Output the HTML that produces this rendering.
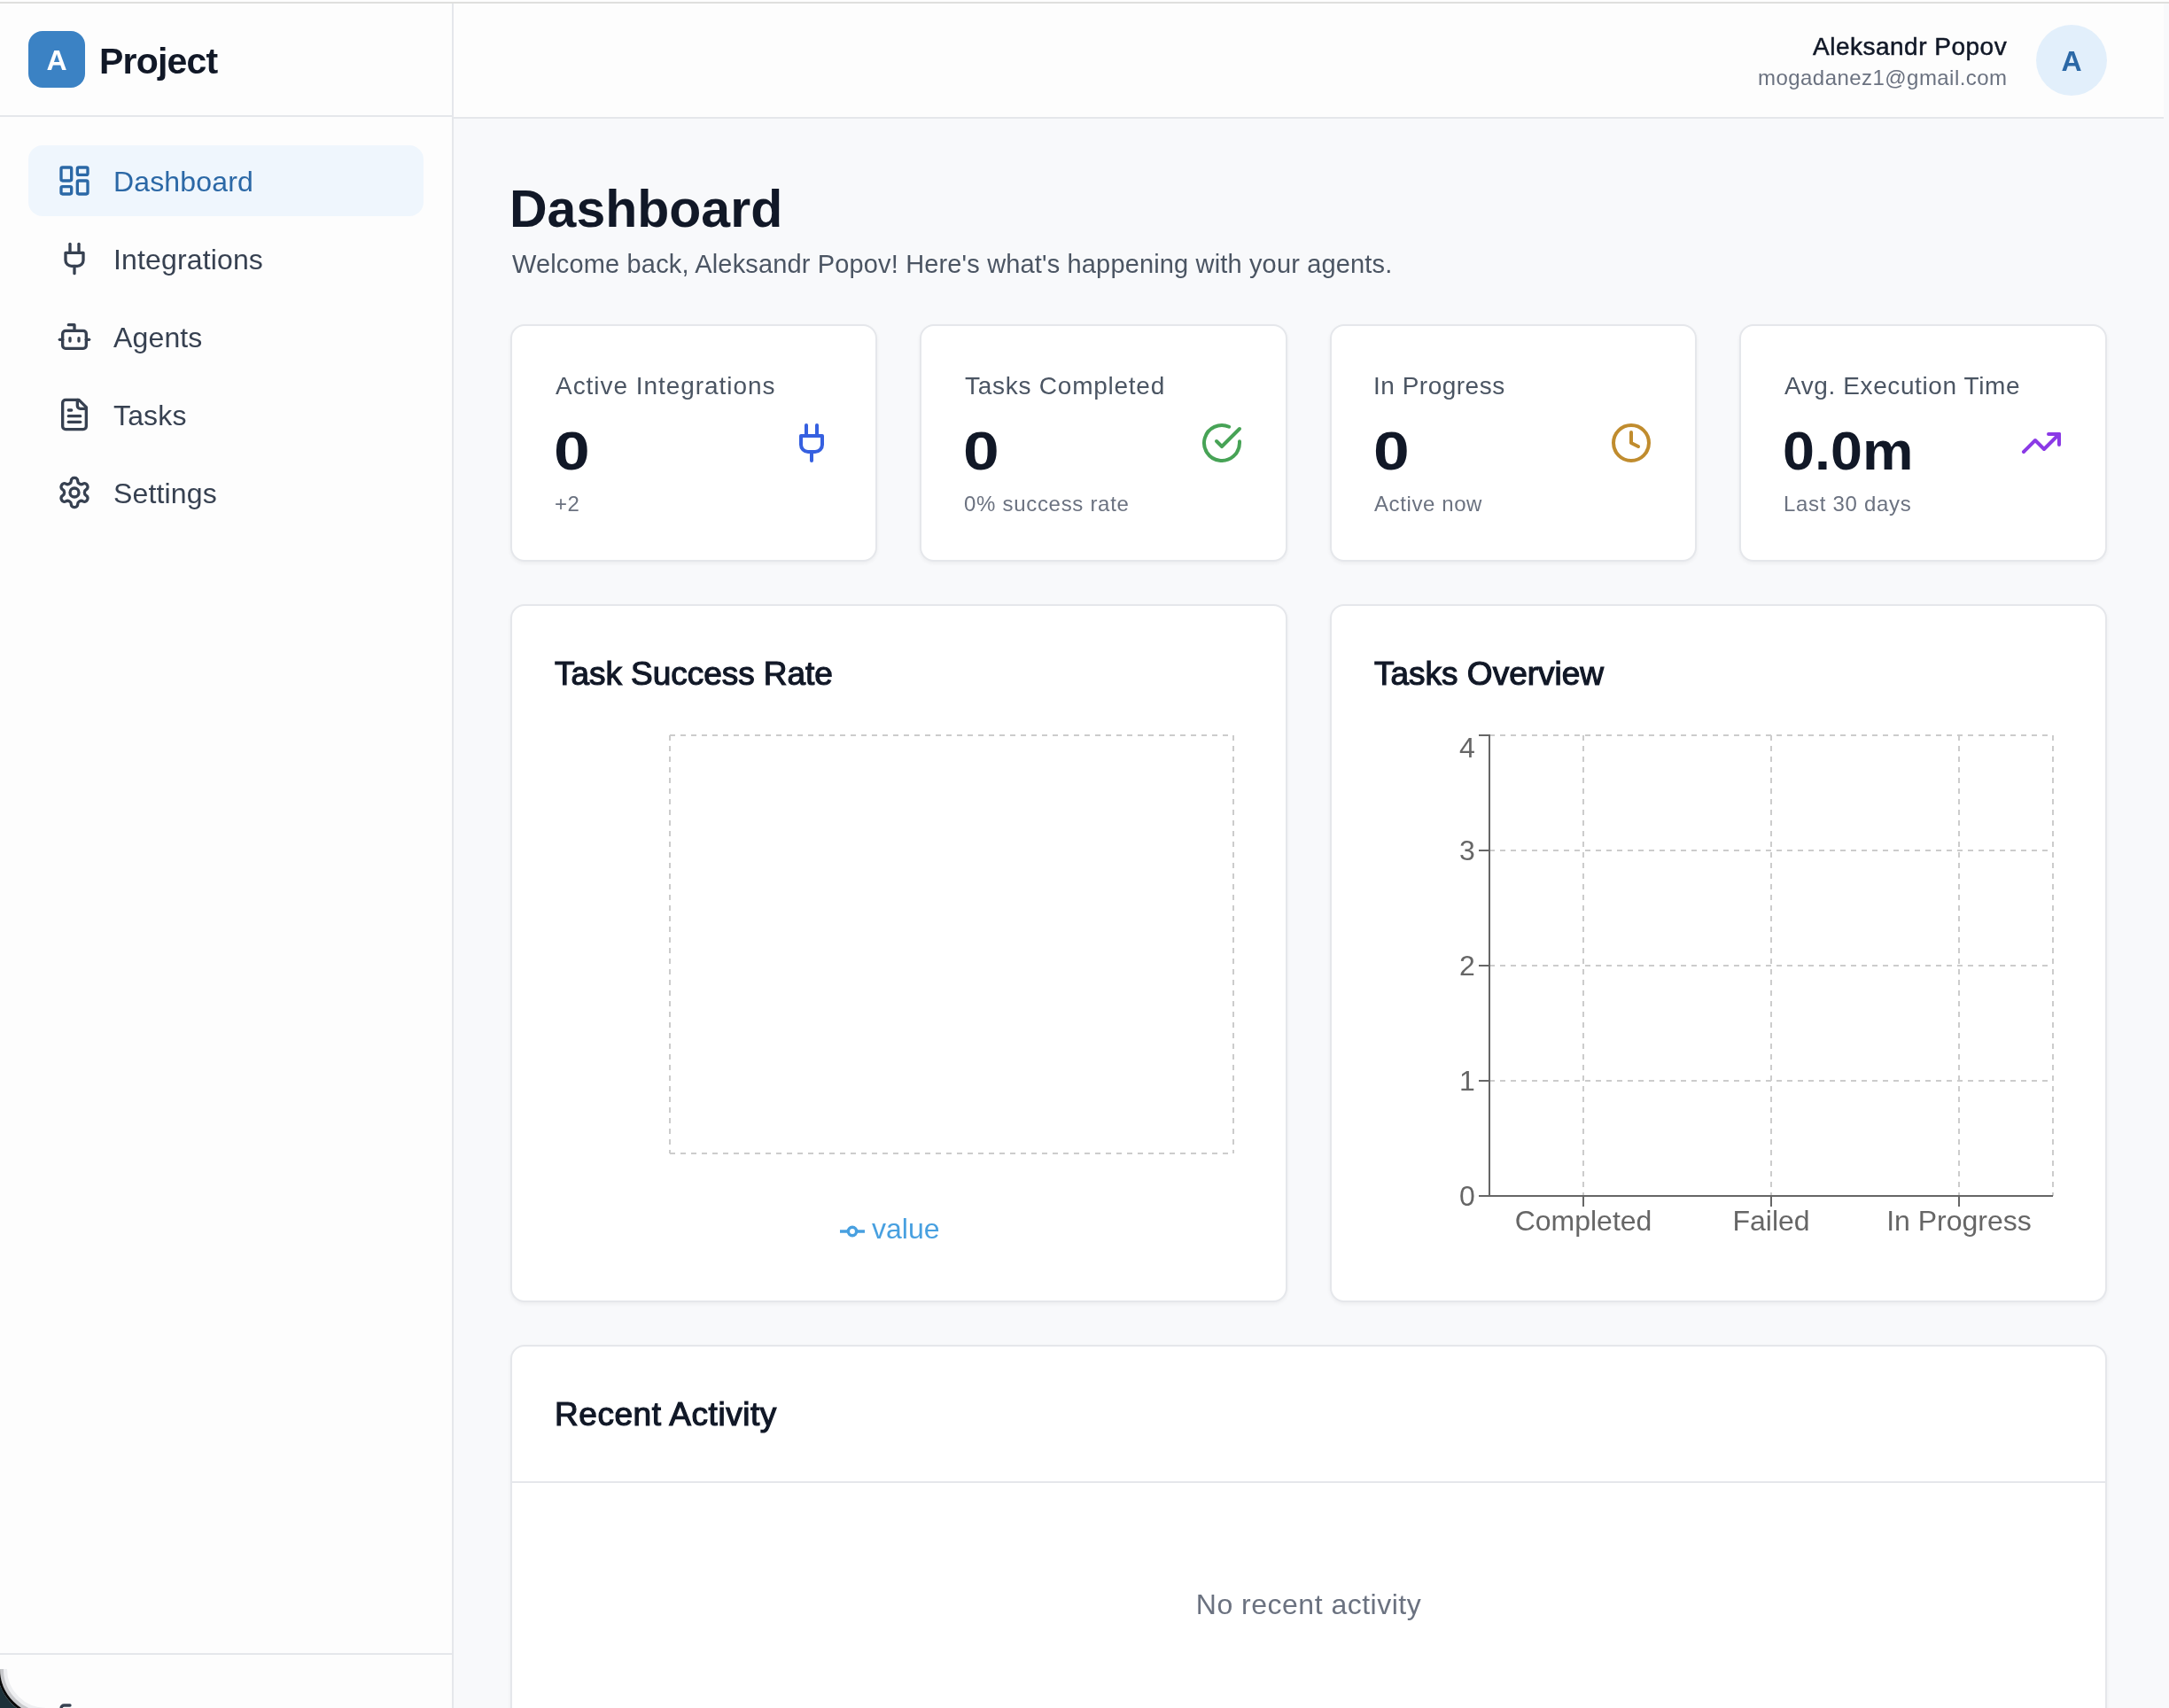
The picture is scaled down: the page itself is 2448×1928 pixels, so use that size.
<!DOCTYPE html>
<html><head><meta charset="utf-8"><style>
html,body{margin:0;padding:0;width:2448px;height:1928px;overflow:hidden;background:#f8f9fb;font-family:"Liberation Sans", sans-serif}
.t{position:absolute;white-space:nowrap;line-height:0;will-change:transform}
@media (max-width:1300px){html{zoom:0.5}}
</style></head><body>
<div style="position:absolute;left:0px;top:0px;width:2448px;height:2px;background:#fdfdfd"></div>
<div style="position:absolute;left:0px;top:2px;width:2448px;height:2px;background:#dfdfdd"></div>
<div style="position:absolute;left:512px;top:4px;width:1936px;height:1924px;background:#f8f9fb"></div>
<div style="position:absolute;left:0px;top:4px;width:512px;height:1924px;background:#fdfdfd;border-right:2px solid #e5e7eb;box-sizing:border-box"></div>
<div style="position:absolute;left:0px;top:130px;width:510px;height:2px;background:#e5e7eb"></div>
<div style="position:absolute;left:32px;top:35px;width:64px;height:64px;background:#3b82c4;border-radius:16px"></div>
<div class="t" style="left:64px;transform:translateX(-50%);top:67.91px;font-size:32px;font-weight:700;color:#ffffff;">A</div>
<div class="t" style="left:111.5px;top:68.79px;font-size:41px;font-weight:700;color:#111827;letter-spacing:-0.8px;">Project</div>
<div style="position:absolute;left:32px;top:164px;width:446px;height:80px;background:#eff6fd;border-radius:16px"></div>
<svg style="position:absolute;left:64px;top:184px" width="40" height="40" viewBox="0 0 24 24" fill="none" stroke="#2b68a6" stroke-width="2" stroke-linecap="round" stroke-linejoin="round"><rect width="7" height="9" x="3" y="3" rx="1"/><rect width="7" height="5" x="14" y="3" rx="1"/><rect width="7" height="9" x="14" y="12" rx="1"/><rect width="7" height="5" x="3" y="16" rx="1"/></svg>
<div class="t" style="left:128px;top:204.91px;font-size:32px;font-weight:400;color:#2b68a6;letter-spacing:0.15px;">Dashboard</div>
<svg style="position:absolute;left:64px;top:272px" width="40" height="40" viewBox="0 0 24 24" fill="none" stroke="#374151" stroke-width="2" stroke-linecap="round" stroke-linejoin="round"><path d="M12 22v-5"/><path d="M9 8V2"/><path d="M15 8V2"/><path d="M18 8v5a4 4 0 0 1-4 4h-4a4 4 0 0 1-4-4V8Z"/></svg>
<div class="t" style="left:128px;top:292.91px;font-size:32px;font-weight:400;color:#374151;letter-spacing:0.15px;">Integrations</div>
<svg style="position:absolute;left:64px;top:360px" width="40" height="40" viewBox="0 0 24 24" fill="none" stroke="#374151" stroke-width="2" stroke-linecap="round" stroke-linejoin="round"><path d="M12 8V4H8"/><rect width="16" height="12" x="4" y="8" rx="2"/><path d="M2 14h2"/><path d="M20 14h2"/><path d="M15 13v2"/><path d="M9 13v2"/></svg>
<div class="t" style="left:128px;top:380.91px;font-size:32px;font-weight:400;color:#374151;letter-spacing:0.15px;">Agents</div>
<svg style="position:absolute;left:64px;top:448px" width="40" height="40" viewBox="0 0 24 24" fill="none" stroke="#374151" stroke-width="2" stroke-linecap="round" stroke-linejoin="round"><path d="M15 2H6a2 2 0 0 0-2 2v16a2 2 0 0 0 2 2h12a2 2 0 0 0 2-2V7Z"/><path d="M14 2v4a2 2 0 0 0 2 2h4"/><path d="M10 9H8"/><path d="M16 13H8"/><path d="M16 17H8"/></svg>
<div class="t" style="left:128px;top:468.91px;font-size:32px;font-weight:400;color:#374151;letter-spacing:0.15px;">Tasks</div>
<svg style="position:absolute;left:64px;top:536px" width="40" height="40" viewBox="0 0 24 24" fill="none" stroke="#374151" stroke-width="2" stroke-linecap="round" stroke-linejoin="round"><path d="M12.22 2h-.44a2 2 0 0 0-2 2v.18a2 2 0 0 1-1 1.73l-.43.25a2 2 0 0 1-2 0l-.15-.08a2 2 0 0 0-2.73.73l-.22.38a2 2 0 0 0 .73 2.73l.15.1a2 2 0 0 1 1 1.72v.51a2 2 0 0 1-1 1.74l-.15.09a2 2 0 0 0-.73 2.73l.22.38a2 2 0 0 0 2.73.73l.15-.08a2 2 0 0 1 2 0l.43.25a2 2 0 0 1 1 1.73V20a2 2 0 0 0 2 2h.44a2 2 0 0 0 2-2v-.18a2 2 0 0 1 1-1.73l.43-.25a2 2 0 0 1 2 0l.15.08a2 2 0 0 0 2.73-.73l.22-.39a2 2 0 0 0-.73-2.73l-.15-.08a2 2 0 0 1-1-1.74v-.5a2 2 0 0 1 1-1.74l.15-.09a2 2 0 0 0 .73-2.73l-.22-.38a2 2 0 0 0-2.73-.73l-.15.08a2 2 0 0 1-2 0l-.43-.25a2 2 0 0 1-1-1.73V4a2 2 0 0 0-2-2z"/><circle cx="12" cy="12" r="3"/></svg>
<div class="t" style="left:128px;top:556.91px;font-size:32px;font-weight:400;color:#374151;letter-spacing:0.15px;">Settings</div>
<div style="position:absolute;left:0px;top:1866px;width:510px;height:2px;background:#e5e7eb"></div>
<div style="position:absolute;left:512px;top:4px;width:1930px;height:130px;background:#fdfdfd;border-bottom:2px solid #e5e7eb;box-sizing:border-box"></div>
<div class="t" style="right:182.5px;top:52.80px;font-size:28px;font-weight:400;color:#111827;letter-spacing:0.5px;-webkit-text-stroke:0.5px #111827">Aleksandr Popov</div>
<div class="t" style="right:182.5px;top:88.18px;font-size:24px;font-weight:400;color:#6b7280;letter-spacing:0.45px;">mogadanez1@gmail.com</div>
<div style="position:absolute;left:2298px;top:28px;width:80px;height:80px;background:#e2effb;border-radius:50%"></div>
<div class="t" style="left:2338px;transform:translateX(-50%);top:68.91px;font-size:32px;font-weight:700;color:#2b68a6;">A</div>
<div class="t" style="left:575px;top:235.56px;font-size:59px;font-weight:700;color:#111827;">Dashboard</div>
<div class="t" style="left:578px;top:298.45px;font-size:29px;font-weight:400;color:#4b5563;letter-spacing:0.15px;">Welcome back, Aleksandr Popov! Here's what's happening with your agents.</div>
<div style="position:absolute;left:576px;top:366px;width:414px;height:268px;background:#fff;border:2px solid #e5e7eb;border-radius:16px;box-sizing:border-box;box-shadow:0 2px 4px rgba(0,0,0,0.05)"></div>
<div class="t" style="left:627px;top:436.30px;font-size:28px;font-weight:400;color:#4b5563;letter-spacing:0.95px;">Active Integrations</div>
<div class="t" style="left:625px;top:509.36px;font-size:61px;font-weight:700;color:#111827;transform:scaleX(1.2);transform-origin:0 0">0</div>
<div class="t" style="left:626px;top:568.88px;font-size:24px;font-weight:400;color:#6b7280;letter-spacing:0.4px;">+2</div>
<svg style="position:absolute;left:892px;top:476px" width="48" height="48" viewBox="0 0 24 24" fill="none" stroke="#3660e0" stroke-width="2" stroke-linecap="round" stroke-linejoin="round"><path d="M12 22v-5"/><path d="M9 8V2"/><path d="M15 8V2"/><path d="M18 8v5a4 4 0 0 1-4 4h-4a4 4 0 0 1-4-4V8Z"/></svg>
<div style="position:absolute;left:1038px;top:366px;width:415px;height:268px;background:#fff;border:2px solid #e5e7eb;border-radius:16px;box-sizing:border-box;box-shadow:0 2px 4px rgba(0,0,0,0.05)"></div>
<div class="t" style="left:1089px;top:436.30px;font-size:28px;font-weight:400;color:#4b5563;letter-spacing:0.75px;">Tasks Completed</div>
<div class="t" style="left:1087px;top:509.36px;font-size:61px;font-weight:700;color:#111827;transform:scaleX(1.2);transform-origin:0 0">0</div>
<div class="t" style="left:1088px;top:568.88px;font-size:24px;font-weight:400;color:#6b7280;letter-spacing:0.7px;">0% success rate</div>
<svg style="position:absolute;left:1355px;top:476px" width="48" height="48" viewBox="0 0 24 24" fill="none" stroke="#47a356" stroke-width="2" stroke-linecap="round" stroke-linejoin="round"><path d="M22 11.08V12a10 10 0 1 1-5.93-9.14"/><polyline points="22 4 12 14.01 9 11.01"/></svg>
<div style="position:absolute;left:1501px;top:366px;width:414px;height:268px;background:#fff;border:2px solid #e5e7eb;border-radius:16px;box-sizing:border-box;box-shadow:0 2px 4px rgba(0,0,0,0.05)"></div>
<div class="t" style="left:1550px;top:436.30px;font-size:28px;font-weight:400;color:#4b5563;letter-spacing:0.5px;">In Progress</div>
<div class="t" style="left:1550px;top:509.36px;font-size:61px;font-weight:700;color:#111827;transform:scaleX(1.2);transform-origin:0 0">0</div>
<div class="t" style="left:1551px;top:568.88px;font-size:24px;font-weight:400;color:#6b7280;letter-spacing:0.6px;">Active now</div>
<svg style="position:absolute;left:1817px;top:476px" width="48" height="48" viewBox="0 0 24 24" fill="none" stroke="#c08c2e" stroke-width="2" stroke-linecap="round" stroke-linejoin="round"><circle cx="12" cy="12" r="10"/><polyline points="12 6 12 12 16 14"/></svg>
<div style="position:absolute;left:1963px;top:366px;width:415px;height:268px;background:#fff;border:2px solid #e5e7eb;border-radius:16px;box-sizing:border-box;box-shadow:0 2px 4px rgba(0,0,0,0.05)"></div>
<div class="t" style="left:2014px;top:436.30px;font-size:28px;font-weight:400;color:#4b5563;letter-spacing:0.6px;">Avg. Execution Time</div>
<div class="t" style="left:2012px;top:509.36px;font-size:61px;font-weight:700;color:#111827;transform:scaleX(1.06);transform-origin:0 0">0.0m</div>
<div class="t" style="left:2013px;top:568.88px;font-size:24px;font-weight:400;color:#6b7280;letter-spacing:0.7px;">Last 30 days</div>
<svg style="position:absolute;left:2280px;top:476px" width="48" height="48" viewBox="0 0 24 24" fill="none" stroke="#8b3ae6" stroke-width="2" stroke-linecap="round" stroke-linejoin="round"><polyline points="22 7 13.5 15.5 8.5 10.5 2 17"/><polyline points="16 7 22 7 22 13"/></svg>
<div style="position:absolute;left:576px;top:682px;width:877px;height:788px;background:#fff;border:2px solid #e5e7eb;border-radius:16px;box-sizing:border-box;box-shadow:0 2px 4px rgba(0,0,0,0.05)"></div>
<div class="t" style="left:626px;top:760.68px;font-size:37px;font-weight:400;color:#111827;letter-spacing:-0.05px;-webkit-text-stroke:1.2px #111827">Task Success Rate</div>
<div style="position:absolute;left:1501px;top:682px;width:877px;height:788px;background:#fff;border:2px solid #e5e7eb;border-radius:16px;box-sizing:border-box;box-shadow:0 2px 4px rgba(0,0,0,0.05)"></div>
<div class="t" style="left:1551px;top:760.68px;font-size:37px;font-weight:400;color:#111827;-webkit-text-stroke:1.2px #111827">Tasks Overview</div>
<svg style="position:absolute;left:0;top:0" width="2448" height="1928"><g stroke="#ccc" stroke-width="2" stroke-dasharray="6 6"><line x1="756" x2="1392" y1="830" y2="830"/><line x1="756" x2="1392" y1="1302" y2="1302"/><line x1="756" x2="756" y1="830" y2="1302"/><line x1="1392" x2="1392" y1="830" y2="1302"/></g></svg>
<svg style="position:absolute;left:948px;top:1376px" width="28" height="28" viewBox="0 0 32 32"><path stroke-width="4" fill="none" stroke="#48a0e0" d="M0,16h10.666666666666666 A5.333333333333333,5.333333333333333,0,1,1,21.333333333333332,16 H32M21.333333333333332,16 A5.333333333333333,5.333333333333333,0,1,1,10.666666666666666,16"/></svg>
<div class="t" style="left:984px;top:1386.91px;font-size:32px;font-weight:400;color:#48a0e0;">value</div>
<svg style="position:absolute;left:0;top:0" width="2448" height="1928"><line x1="1681" x2="2317" y1="830" y2="830" stroke="#ccc" stroke-width="2" stroke-dasharray="6 6"/><line x1="1681" x2="2317" y1="960" y2="960" stroke="#ccc" stroke-width="2" stroke-dasharray="6 6"/><line x1="1681" x2="2317" y1="1090" y2="1090" stroke="#ccc" stroke-width="2" stroke-dasharray="6 6"/><line x1="1681" x2="2317" y1="1220" y2="1220" stroke="#ccc" stroke-width="2" stroke-dasharray="6 6"/><line x1="1787" x2="1787" y1="830" y2="1350" stroke="#ccc" stroke-width="2" stroke-dasharray="6 6"/><line x1="1999" x2="1999" y1="830" y2="1350" stroke="#ccc" stroke-width="2" stroke-dasharray="6 6"/><line x1="2211" x2="2211" y1="830" y2="1350" stroke="#ccc" stroke-width="2" stroke-dasharray="6 6"/><line x1="2317" x2="2317" y1="830" y2="1350" stroke="#ccc" stroke-width="2" stroke-dasharray="6 6"/><line x1="1681" x2="1681" y1="829" y2="1350" stroke="#666" stroke-width="2"/><line x1="1681" x2="2317" y1="1350" y2="1350" stroke="#666" stroke-width="2"/><line x1="1669" x2="1681" y1="830" y2="830" stroke="#666" stroke-width="2"/><line x1="1669" x2="1681" y1="960" y2="960" stroke="#666" stroke-width="2"/><line x1="1669" x2="1681" y1="1090" y2="1090" stroke="#666" stroke-width="2"/><line x1="1669" x2="1681" y1="1220" y2="1220" stroke="#666" stroke-width="2"/><line x1="1669" x2="1681" y1="1350" y2="1350" stroke="#666" stroke-width="2"/><line x1="1787" x2="1787" y1="1350" y2="1362" stroke="#666" stroke-width="2"/><line x1="1999" x2="1999" y1="1350" y2="1362" stroke="#666" stroke-width="2"/><line x1="2211" x2="2211" y1="1350" y2="1362" stroke="#666" stroke-width="2"/></svg>
<div class="t" style="right:783px;top:843.91px;font-size:32px;font-weight:400;color:#666;">4</div>
<div class="t" style="right:783px;top:959.91px;font-size:32px;font-weight:400;color:#666;">3</div>
<div class="t" style="right:783px;top:1089.91px;font-size:32px;font-weight:400;color:#666;">2</div>
<div class="t" style="right:783px;top:1219.91px;font-size:32px;font-weight:400;color:#666;">1</div>
<div class="t" style="right:783px;top:1349.91px;font-size:32px;font-weight:400;color:#666;">0</div>
<div class="t" style="left:1787px;transform:translateX(-50%);top:1377.91px;font-size:32px;font-weight:400;color:#666;">Completed</div>
<div class="t" style="left:1999px;transform:translateX(-50%);top:1377.91px;font-size:32px;font-weight:400;color:#666;">Failed</div>
<div class="t" style="left:2211px;transform:translateX(-50%);top:1377.91px;font-size:32px;font-weight:400;color:#666;">In Progress</div>
<div style="position:absolute;left:576px;top:1518px;width:1802px;height:500px;background:#fff;border:2px solid #e5e7eb;border-radius:16px;box-sizing:border-box;box-shadow:0 2px 4px rgba(0,0,0,0.05)"></div>
<div class="t" style="left:626px;top:1596.68px;font-size:37px;font-weight:400;color:#111827;letter-spacing:0.55px;-webkit-text-stroke:1.2px #111827">Recent Activity</div>
<div style="position:absolute;left:578px;top:1672px;width:1798px;height:2px;background:#e5e7eb"></div>
<div class="t" style="left:1477px;transform:translateX(-50%);top:1810.91px;font-size:32px;font-weight:400;color:#6b7280;letter-spacing:0.5px;">No recent activity</div>
<svg style="position:absolute;left:64px;top:1920px" width="40" height="40" viewBox="0 0 24 24" fill="none" stroke="#374151" stroke-width="2" stroke-linecap="round" stroke-linejoin="round"><path d="M9 21H5a2 2 0 0 1-2-2V5a2 2 0 0 1 2-2h4"/><polyline points="16 17 21 12 16 7"/><line x1="21" x2="9" y1="12" y2="12"/></svg>
<svg style="position:absolute;left:0;top:1860px" width="70" height="68"><path d="M52 70 A46 46 0 0 1 6 24" fill="none" stroke="#eeeff1" stroke-width="4"/><path d="M52 74 A50 50 0 0 1 2 24" fill="none" stroke="#c8c9cc" stroke-width="4"/><path d="M52 77.5 A53.5 53.5 0 0 1 -1.5 24" fill="none" stroke="#0a0a0a" stroke-width="3"/><path d="M-10 24 V90 H52 V79 A55 55 0 0 1 -3 24 Z" fill="#1d3139"/></svg>
</body></html>
